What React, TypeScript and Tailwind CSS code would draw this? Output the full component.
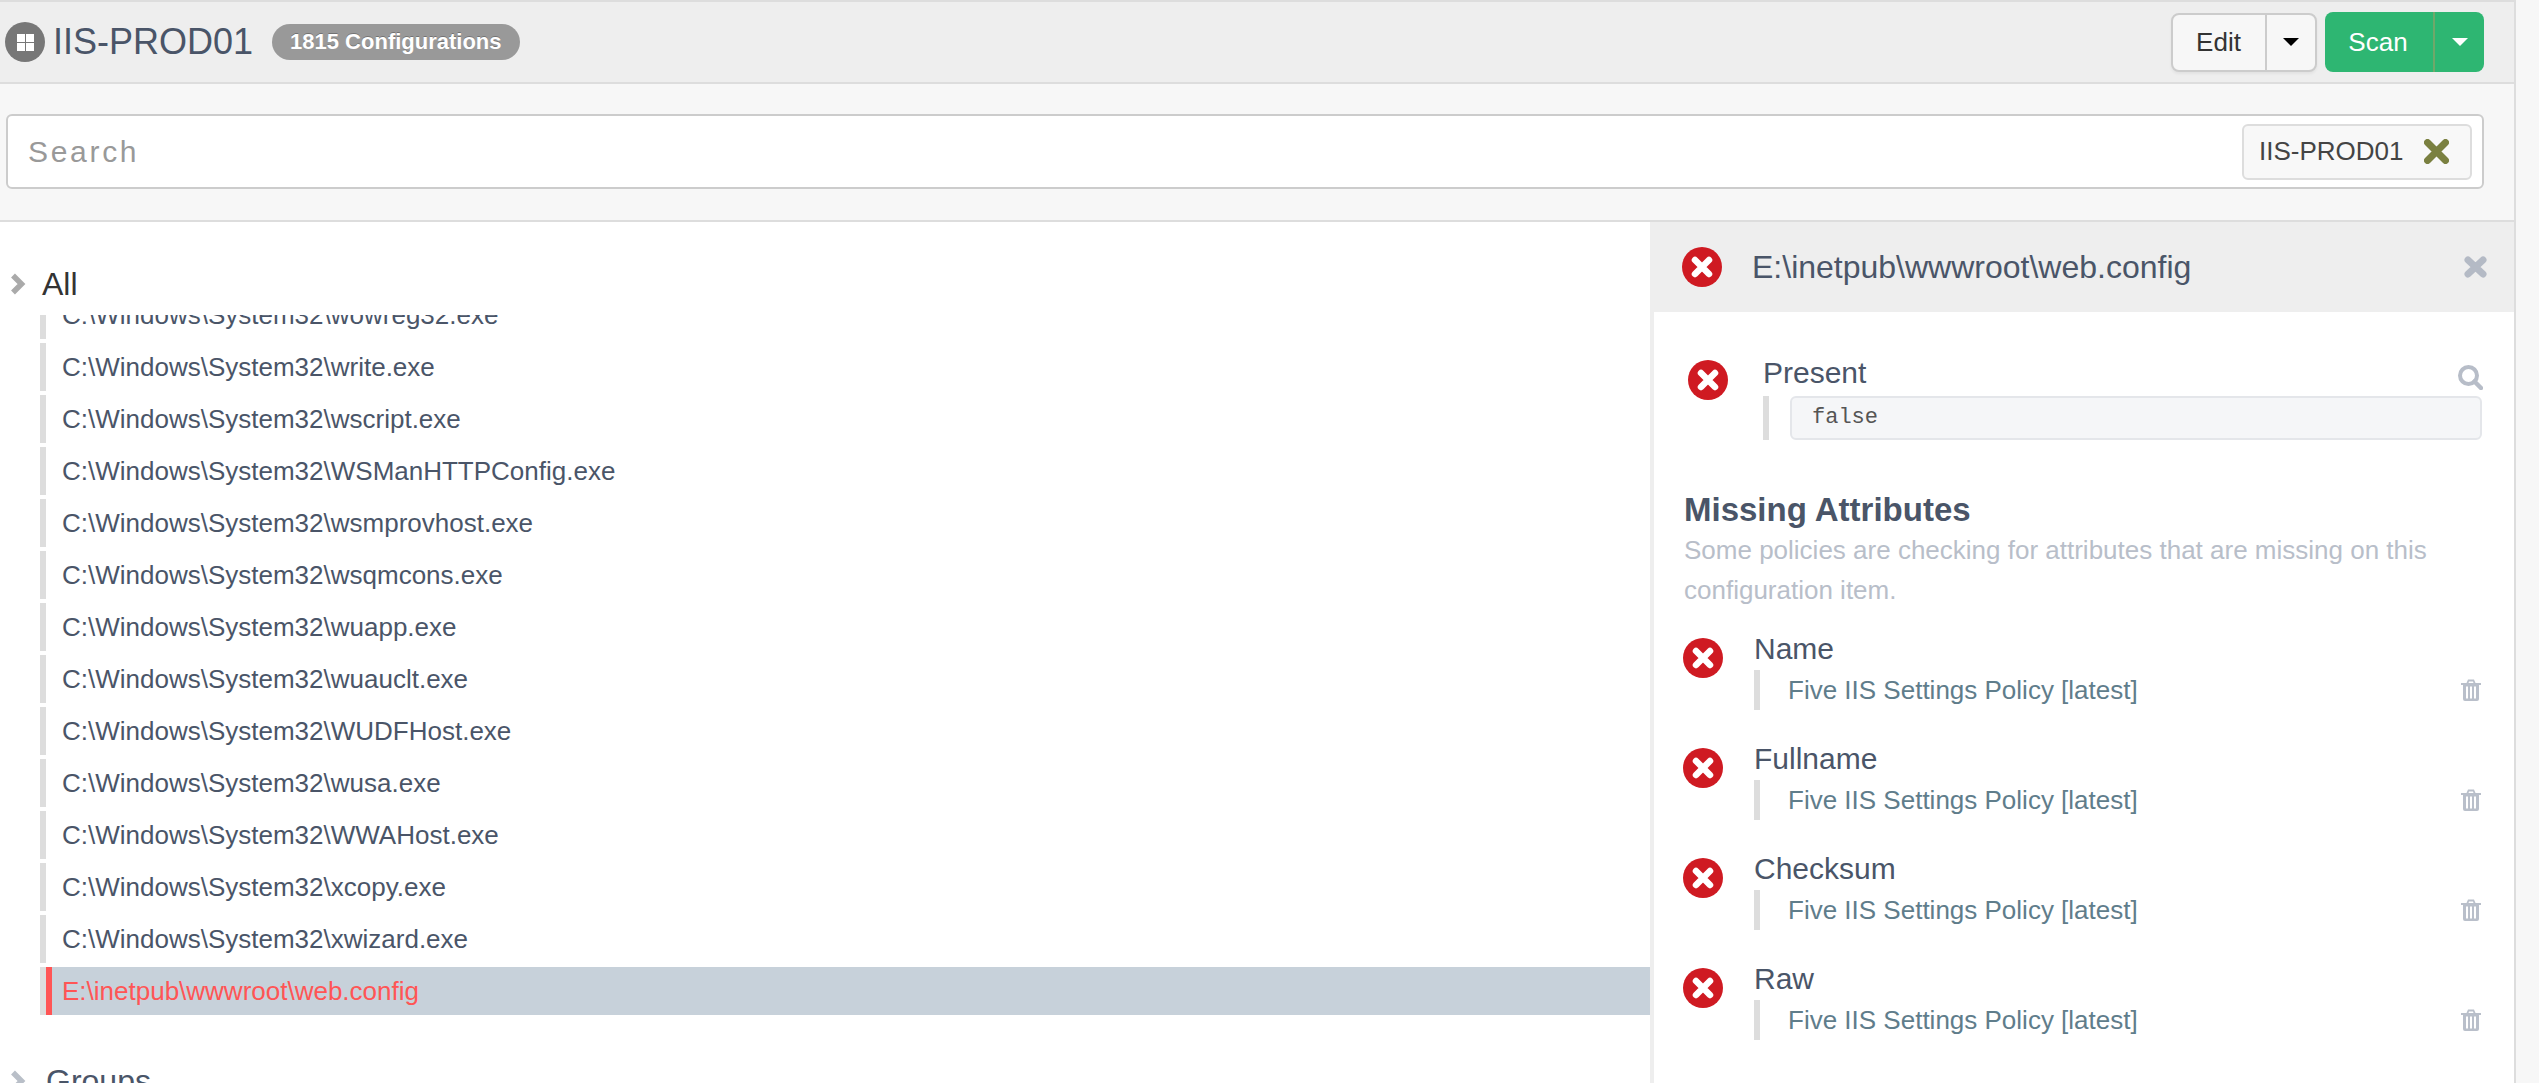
import React from "react";

const files = [
  "C:\\Windows\\System32\\wowreg32.exe",
  "C:\\Windows\\System32\\write.exe",
  "C:\\Windows\\System32\\wscript.exe",
  "C:\\Windows\\System32\\WSManHTTPConfig.exe",
  "C:\\Windows\\System32\\wsmprovhost.exe",
  "C:\\Windows\\System32\\wsqmcons.exe",
  "C:\\Windows\\System32\\wuapp.exe",
  "C:\\Windows\\System32\\wuauclt.exe",
  "C:\\Windows\\System32\\WUDFHost.exe",
  "C:\\Windows\\System32\\wusa.exe",
  "C:\\Windows\\System32\\WWAHost.exe",
  "C:\\Windows\\System32\\xcopy.exe",
  "C:\\Windows\\System32\\xwizard.exe",
];

const attrs = ["Name", "Fullname", "Checksum", "Raw"];

function ErrorIcon() {
  return (
    <svg width="40" height="40" viewBox="0 0 40 40" className="shrink-0">
      <circle cx="20" cy="20" r="20" fill="#cf1a22" />
      <path d="M13 13 L27 27 M27 13 L13 27" stroke="#fff" strokeWidth="6.5" strokeLinecap="round" />
    </svg>
  );
}

function Chevron({ color }: { color: string }) {
  return (
    <svg width="16" height="22" viewBox="0 0 16 22" className="shrink-0">
      <path d="M3 2.5 L11.5 11 L3 19.5" fill="none" stroke={color} strokeWidth="5.5" />
    </svg>
  );
}

function Caret({ color }: { color: string }) {
  return (
    <svg width="16" height="8" viewBox="0 0 16 8">
      <path d="M0 0 H16 L8 8 Z" fill={color} />
    </svg>
  );
}

function Trash() {
  return (
    <svg width="20" height="22" viewBox="0 0 20 22" className="shrink-0">
      <path
        fillRule="evenodd"
        d="M0 4 H5.5 L7 0.5 H13 L14.5 4 H20 V6 H18 V20 Q18 22 16 22 H4 Q2 22 2 20 V6 H0 Z M7.5 4 H12.5 L12 2.5 H8 Z M5 7.5 V19.5 H7 V7.5 Z M9 7.5 V19.5 H11 V7.5 Z M13 7.5 V19.5 H15 V7.5 Z"
        fill="#b9bfca"
      />
    </svg>
  );
}

export default function App() {
  return (
    <div className="w-[2539px] h-[1083px] overflow-hidden bg-[#f7f7f7] font-['Liberation_Sans',sans-serif] text-[#4a5568]">
      <div className="w-[2516px] h-[1083px] border-r-2 border-[#ddd] flex flex-col">
        {/* Header */}
        <div className="h-[84px] shrink-0 border-y-2 border-[#ddd] bg-[#eee] flex items-center pl-[5px] pr-[30px]">
          <div className="w-10 h-10 rounded-full bg-[#777] flex items-center justify-center">
            <svg width="17" height="17" viewBox="0 0 17 17">
              <path d="M0 0 H8 V8 H0 Z M9 0 H17 V8 H9 Z M0 9 H8 V17 H0 Z M9 9 H17 V17 H9 Z" fill="#fff" />
            </svg>
          </div>
          <span className="ml-2 text-[36px] leading-[40px]">IIS-PROD01</span>
          <span className="ml-[19px] h-9 px-[18px] rounded-full bg-[#999] text-white text-[22px] font-bold leading-9 [text-shadow:0_-1px_0_rgba(0,0,0,0.25)]">
            1815 Configurations
          </span>
          <div className="ml-auto flex items-center gap-2">
            <div className="flex h-[59px] w-[146px] rounded-lg border-2 border-[#ccc] bg-[#f7f7f7] text-[#333] text-[26px] shadow-[0_2px_3px_rgba(0,0,0,0.05)]">
              <span className="w-[94px] pr-px flex items-center justify-center border-r-2 border-[#ccc]">Edit</span>
              <span className="flex-1 flex items-center justify-center">
                <Caret color="#000" />
              </span>
            </div>
            <div className="flex h-[60px] w-[159px] rounded-lg bg-[#2eb672] text-white text-[26px]">
              <span className="w-[110px] pr-[2px] flex items-center justify-center border-r-2 border-[#6fa86a]">Scan</span>
              <span className="flex-1 flex items-center justify-center">
                <Caret color="#fff" />
              </span>
            </div>
          </div>
        </div>

        {/* Search */}
        <div className="h-[138px] shrink-0 border-b-2 border-[#ddd] pt-[30px] pl-[6px] pr-[30px]">
          <div className="h-[75px] rounded-md border-2 border-[#ccc] bg-white flex items-center pl-5 pr-[10px]">
            <input
              readOnly
              placeholder="Search"
              className="flex-1 min-w-0 bg-transparent outline-none text-[30px] tracking-[2.7px] placeholder:text-[#999]"
            />
            <div className="w-[230px] h-[56px] rounded-md border-2 border-[#ddd] bg-[#f8f8f8] flex items-center pl-[15px] text-[26px] text-[#444]">
              <span>IIS-PROD01</span>
              <svg width="25" height="25" viewBox="0 0 25 25" className="ml-5">
                <path d="M3.5 3.5 L21.5 21.5 M21.5 3.5 L3.5 21.5" stroke="#7a8040" strokeWidth="7" strokeLinecap="round" />
              </svg>
            </div>
          </div>
        </div>

        {/* Body */}
        <div className="flex flex-1 min-h-0">
          {/* Tree */}
          <div className="w-[1650px] shrink-0 overflow-hidden bg-white">
            <div className="h-10 mt-[42px] flex items-center pl-[10px] text-[32px] text-[#333]">
              <Chevron color="#aaa" />
              <span className="ml-[16px]">All</span>
            </div>
            <div className="mt-[11px] h-[700px] overflow-hidden flex flex-col justify-end gap-1">
              {files.map((f) => (
                <div key={f} className="h-12 shrink-0 ml-10 border-l-[6px] border-[#ddd] pl-4 text-[26px] leading-[48px]">
                  {f}
                </div>
              ))}
              <div className="h-12 shrink-0 ml-10 border-l-[6px] border-[#ddd] flex">
                <div className="flex-1 border-l-[6px] border-[#f55] bg-[#c7d1da] pl-[10px] text-[26px] leading-[48px] text-[#f55]">
                  E:\inetpub\wwwroot\web.config
                </div>
              </div>
            </div>
            <div className="h-10 mt-[46px] flex items-center pl-[10px] text-[32px]">
              <Chevron color="#b9bfc8" />
              <span className="ml-5">Groups</span>
            </div>
          </div>

          {/* Detail panel */}
          <div className="flex-1 min-w-0 border-l-4 border-[#eee] bg-white">
            <div className="h-[90px] bg-[#eee] flex items-center pl-7 pr-[27px]">
              <ErrorIcon />
              <span className="ml-[30px] text-[32px]">E:\inetpub\wwwroot\web.config</span>
              <svg width="23" height="22" viewBox="0 0 23 22" className="ml-auto">
                <path d="M4 4 L19 18 M19 4 L4 18" stroke="#b4bac5" strokeWidth="7" strokeLinecap="round" />
              </svg>
            </div>

            <div className="pt-[43px] pl-[34px] pr-8 flex">
              <div className="mt-[5px]">
                <ErrorIcon />
              </div>
              <div className="ml-[35px] flex-1 min-w-0">
                <div className="h-9 flex justify-between text-[30px] leading-9">
                  <span>Present</span>
                  <svg width="25" height="25" viewBox="0 0 25 25" fill="none" stroke="#b7bdc8" strokeWidth="4" className="mt-[10px] mr-[-1px]">
                    <circle cx="10.5" cy="10.5" r="8.5" />
                    <path d="M16.5 16.5 L23 23" strokeLinecap="round" strokeWidth="4.5" />
                  </svg>
                </div>
                <div className="mt-[5px] h-11 border-l-[6px] border-[#ddd] pl-[21px]">
                  <div className="h-11 rounded-md border-2 border-[#e4e6ea] bg-[#f5f6f8] pl-5 font-['Liberation_Mono',monospace] text-[22px] leading-[40px] text-[#555]">
                    false
                  </div>
                </div>
              </div>
            </div>

            <div className="mt-[50px] pl-[30px] pr-8">
              <div className="text-[33px] leading-10 font-bold">Missing Attributes</div>
              <div className="text-[26px] leading-10 text-[#b8bec9]">
                Some policies are checking for attributes that are missing on this configuration item.
              </div>
            </div>

            <div className="mt-[22px] pl-[29px] pr-[33px] flex flex-col gap-8">
              {attrs.map((a) => (
                <div key={a} className="flex">
                  <div className="mt-[6px]">
                    <ErrorIcon />
                  </div>
                  <div className="ml-[31px] flex-1 min-w-0">
                    <div className="h-[38px] text-[30px] leading-[33px]">{a}</div>
                    <div className="h-10 border-l-[6px] border-[#ddd] pl-7 flex items-center justify-between text-[26px] text-[#607d8b]">
                      <span>Five IIS Settings Policy [latest]</span>
                      <Trash />
                    </div>
                  </div>
                </div>
              ))}
            </div>
          </div>
        </div>
      </div>
    </div>
  );
}
